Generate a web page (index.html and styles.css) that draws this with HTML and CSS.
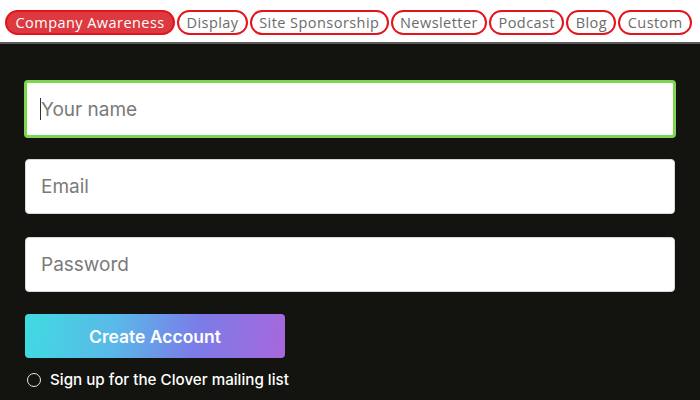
FILE: index.html
```html
<!DOCTYPE html>
<html>
<head>
<meta charset="utf-8">
<link rel="stylesheet" href="styles.css">
</head>
<body>
<nav class="tabs">
  <span class="tab active">Company Awareness</span>
  <span class="tab">Display</span>
  <span class="tab">Site Sponsorship</span>
  <span class="tab">Newsletter</span>
  <span class="tab">Podcast</span>
  <span class="tab">Blog</span>
  <span class="tab">Custom</span>
</nav>
<main class="form">
  <div class="field focused"><span class="caret"></span><span class="ph">Your name</span></div>
  <div class="field"><span class="ph">Email</span></div>
  <div class="field"><span class="ph">Password</span></div>
  <button class="btn">Create Account</button>
  <label class="check"><span class="box"></span><span>Sign up for the Clover mailing list</span></label>
</main>
</body>
</html>
```
FILE: styles.css
```css
html, body {
  margin: 0;
  padding: 0;
  width: 700px;
  height: 400px;
  overflow: hidden;
  background: #131410;
}
.tabs {
  background: #fff;
  border-bottom: 2px solid #5a5a5a;
  display: flex;
  align-items: flex-start;
  gap: 2px;
  padding: 0 0 0 5px;
  box-sizing: border-box;
  height: 44px;
}
.tab {
  margin-top: 10px;
  height: 25px;
  box-sizing: border-box;
  border: 2px solid #e3141c;
  border-radius: 13px;
  padding: 0 7.3px;
  display: flex;
  align-items: center;
  font-family: "Open Sans", sans-serif;
  font-size: 14.5px;
  letter-spacing: 0.45px;
  color: #6b6b6b;
  white-space: nowrap;
}
.tab.active {
  background: #dc3a40;
  color: #fff;
  padding: 0 8.5px;
}
.form {
  padding: 36px 24px 0 25px;
  display: flex;
  flex-direction: column;
  font-family: Inter, "Noto Sans", sans-serif;
}
.field {
  height: 55px;
  background: #fff;
  border-radius: 4px;
  box-sizing: border-box;
  border: 1px solid #d8d8d8;
  display: flex;
  align-items: center;
  padding-left: 15px;
  margin-bottom: 23px;
  margin-right: 1px;
}
.field.focused {
  height: 58px;
  border: 3px solid #7ed650;
  margin-left: -1px;
  margin-right: 0;
  padding-left: 13px;
  margin-bottom: 21px;
}
.caret {
  width: 1px;
  height: 22px;
  background: #333;
}
.ph {
  font-size: 19px;
  color: #7a7a7a;
}
.btn {
  width: 260px;
  height: 44px;
  margin-top: -1px;
  border: 0;
  border-radius: 4px;
  background: linear-gradient(100deg, #3fdbe2 0%, #5ab8e8 35%, #7a7de8 65%, #a866dc 100%);
  color: #fff;
  font-family: Inter, sans-serif;
  font-weight: 600;
  font-size: 17.5px;
  padding: 0;
}
.check {
  display: flex;
  align-items: center;
  gap: 9px;
  margin-top: 12px;
  margin-left: 2px;
  color: #fff;
  font-size: 15.2px;
  font-weight: 500;
}
.box {
  width: 12px;
  height: 12px;
  border: 1.5px solid #e8e8e8;
  border-radius: 50%;
  flex-shrink: 0;
}
```
